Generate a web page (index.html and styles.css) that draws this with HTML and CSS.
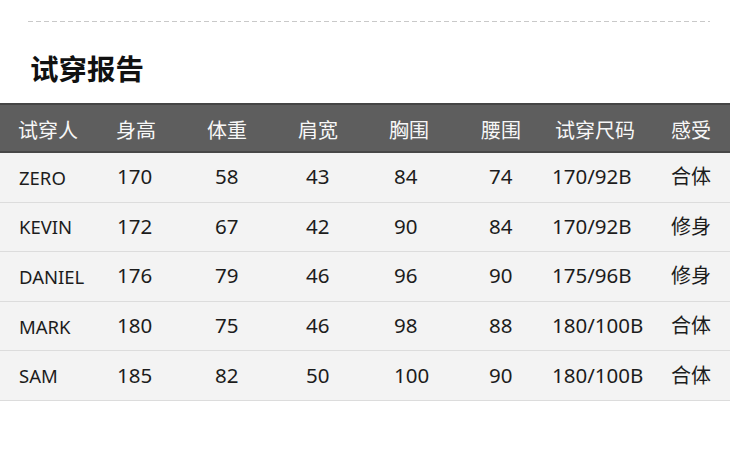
FILE: index.html
```html
<!DOCTYPE html>
<html lang="zh-CN">
<head>
<meta charset="utf-8">
<title>试穿报告</title>
<link rel="stylesheet" href="styles.css">
</head>
<body>
<div class="page">
  <div class="divider"></div>
  <h1 class="title">试穿报告</h1>
  <div class="report">
    <div class="row head">
      <div class="cell">试穿人</div>
      <div class="cell">身高</div>
      <div class="cell">体重</div>
      <div class="cell">肩宽</div>
      <div class="cell">胸围</div>
      <div class="cell">腰围</div>
      <div class="cell">试穿尺码</div>
      <div class="cell">感受</div>
    </div>
    <div class="row data">
      <div class="cell name">ZERO</div>
      <div class="cell">170</div>
      <div class="cell">58</div>
      <div class="cell">43</div>
      <div class="cell">84</div>
      <div class="cell">74</div>
      <div class="cell">170/92B</div>
      <div class="cell">合体</div>
    </div>
    <div class="row data">
      <div class="cell name">KEVIN</div>
      <div class="cell">172</div>
      <div class="cell">67</div>
      <div class="cell">42</div>
      <div class="cell">90</div>
      <div class="cell">84</div>
      <div class="cell">170/92B</div>
      <div class="cell">修身</div>
    </div>
    <div class="row data">
      <div class="cell name">DANIEL</div>
      <div class="cell">176</div>
      <div class="cell">79</div>
      <div class="cell">46</div>
      <div class="cell">96</div>
      <div class="cell">90</div>
      <div class="cell">175/96B</div>
      <div class="cell">修身</div>
    </div>
    <div class="row data">
      <div class="cell name">MARK</div>
      <div class="cell">180</div>
      <div class="cell">75</div>
      <div class="cell">46</div>
      <div class="cell">98</div>
      <div class="cell">88</div>
      <div class="cell">180/100B</div>
      <div class="cell">合体</div>
    </div>
    <div class="row data">
      <div class="cell name">SAM</div>
      <div class="cell">185</div>
      <div class="cell">82</div>
      <div class="cell">50</div>
      <div class="cell">100</div>
      <div class="cell">90</div>
      <div class="cell">180/100B</div>
      <div class="cell">合体</div>
    </div>
  </div>
</div>
</body>
</html>
```

FILE: styles.css
```css
* { box-sizing: border-box; }

html, body {
  margin: 0;
  padding: 0;
  background: #ffffff;
}

body {
  width: 730px;
  height: 462px;
  overflow: hidden;
  font-family: "Noto Sans", "Noto Sans CJK SC", sans-serif;
  color: #1a1a1a;
}

.page {
  padding-top: 21px;
}

.divider {
  height: 1px;
  margin: 0 20px 0 28px;
  background: repeating-linear-gradient(to right, #c9c9c9 0 5px, transparent 5px 8px);
}

.title {
  margin: 0;
  padding: 31px 0 0 30px;
  height: 81px;
  font-family: "Noto Sans CJK SC", sans-serif;
  font-size: 28.5px;
  font-weight: 700;
  line-height: 30px;
  color: #111111;
}

.report {
  width: 730px;
}

.row {
  display: grid;
  grid-template-columns: 98px 91px 91px 91px 92px 71px 119px 1fr;
  padding-left: 18px;
  align-items: center;
}

.head {
  height: 50px;
  background: #5e5e5e;
  border-top: 2px solid #454545;
  border-bottom: 2px solid #474747;
  padding-top: 4px;
  color: #f7f7f7;
  font-family: "Noto Sans CJK SC", sans-serif;
  font-size: 20px;
  line-height: 24px;
}

.head .cell:nth-child(7) { padding-left: 3px; }

.data {
  height: 49.6px;
  background: #f3f3f3;
  border-bottom: 1px solid #dcdcdc;
  font-size: 20.5px;
  line-height: 24px;
  color: #1c1c1c;
  padding-bottom: 2px;
}

.data .cell:nth-child(8) {
  font-family: "Noto Sans CJK SC", sans-serif;
  font-size: 20px;
}

.data .name {
  font-size: 18.5px;
  padding-left: 1px;
  padding-top: 3px;
}

.data .cell:nth-child(2) { padding-left: 1px; }
.data .cell:nth-child(3) { padding-left: 8px; }
.data .cell:nth-child(4) { padding-left: 8px; }
.data .cell:nth-child(5) { padding-left: 5px; }
.data .cell:nth-child(6) { padding-left: 8px; }
```
